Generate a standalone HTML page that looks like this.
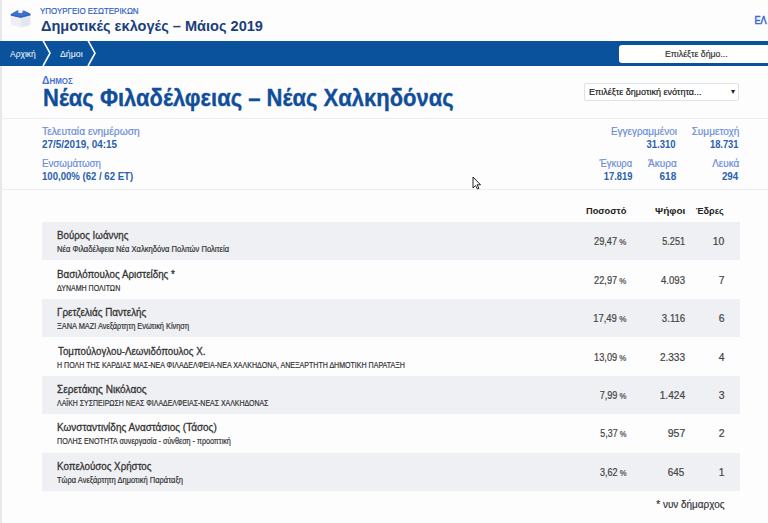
<!DOCTYPE html>
<html><head><meta charset="utf-8">
<style>
*{margin:0;padding:0;box-sizing:border-box}
html,body{width:768px;height:523px;overflow:hidden;background:#fdfdfe;font-family:"Liberation Sans",sans-serif}
.a{position:absolute;white-space:nowrap;line-height:1.15}
.hr{position:absolute;left:0;width:768px;height:1px;background:#eceef3}
.row{position:absolute;left:42px;width:697.5px;height:38.43px;background:#eff0f4}
</style></head><body>
<div class="a" style="left:0;top:0;width:2px;height:523px;background:#e6e7ea"></div>
<svg class="a" style="left:0;top:0" width="40" height="40" viewBox="0 0 40 40">
  <polygon points="10.8,15.3 20.7,17.7 20.7,27.6 10.8,24.9" fill="#edeff4"/>
  <polygon points="20.7,17.7 30.4,15.1 30.4,24.9 20.7,27.6" fill="#e3e6ed"/>
  <polygon points="10.8,13.9 17,10.6 24,10.4 30.4,13.6 30.4,15.2 20.7,17.7 10.8,15.5" fill="#3d71cd"/>
  <polygon points="10.8,14.3 20.7,16.4 30.4,13.9 30.4,15.2 20.7,17.7 10.8,15.5" fill="#2f62c0"/>
  <polygon points="17.8,12.4 19.6,9.4 23.3,10.8 21.5,13.3" fill="#f5f7fb"/>
</svg>
<div class="a" style="left:0;top:41px;width:768px;height:24.6px;background:#0b529c"></div>
<svg class="a" style="left:41.8px;top:41px" width="10" height="25" viewBox="0 0 10 25"><polyline points="1,-0.5 8,12.2 1,25" fill="none" stroke="#fff" stroke-width="1.6"/></svg>
<svg class="a" style="left:87.4px;top:41px" width="10" height="25" viewBox="0 0 10 25"><polyline points="1,-0.5 8,12.2 1,25" fill="none" stroke="#fff" stroke-width="1.6"/></svg>
<div class="a" style="left:619px;top:45px;width:160px;height:17.5px;background:#fff;border-radius:3px"></div>
<div class="a" style="left:584px;top:83px;width:155px;height:18px;border:1px solid #dde1e8;border-radius:2px;background:#fff"></div>
<div class="a" style="left:731px;top:86.5px;font-size:8px;color:#222">▾</div>
<div class="hr" style="top:117.5px"></div>
<div class="hr" style="top:188.5px"></div>
<div class="row" style="top:222.00px"></div>
<div class="row" style="top:298.86px"></div>
<div class="row" style="top:375.72px"></div>
<div class="row" style="top:452.58px"></div>
<div class="a" id="min" style="top:5.58px;font-size:8.7px;font-weight:normal;color:#2f62c6;left:40.34px;transform:scaleX(0.9142);transform-origin:left top;-webkit-text-stroke:0.2px currentColor;">ΥΠΟΥΡΓΕΙΟ ΕΣΩΤΕΡΙΚΩΝ</div>
<div class="a" id="app" style="top:17.1px;font-size:15.3px;font-weight:bold;color:#1b3f7a;left:40.64px;transform:scaleX(0.9520);transform-origin:left top;">Δημοτικές εκλογές – Μάιος 2019</div>
<div class="a" id="el" style="top:14.06px;font-size:11px;font-weight:normal;color:#3a68d2;right:1.66px;transform:scaleX(0.8330);transform-origin:right top;-webkit-text-stroke:0.55px currentColor;">ΕΛ</div>
<div class="a" id="cr1" style="top:48.84px;font-size:9.4px;font-weight:normal;color:#fff;left:9.66px;transform:scaleX(0.9017);transform-origin:left top;">Αρχική</div>
<div class="a" id="cr2" style="top:48.84px;font-size:9.4px;font-weight:normal;color:#fff;left:59.64px;transform:scaleX(0.9349);transform-origin:left top;">Δήμοι</div>
<div class="a" id="srch" style="top:48.83px;font-size:9.3px;font-weight:normal;color:#333;left:664.80px;transform:scaleX(0.9404);transform-origin:left top;-webkit-text-stroke:0.2px currentColor;">Επιλέξτε δήμο...</div>
<div class="a" id="dhm" style="top:73.98px;font-size:11.2px;font-weight:bold;color:#4a72d0;left:41.98px;transform:scaleX(0.9242);transform-origin:left top;">Δ<span style="font-size:0.77em">ΗΜΟΣ</span></div>
<div class="a" id="ttl" style="top:85.31px;font-size:23.1px;font-weight:bold;color:#114e9a;left:42.66px;transform:scaleX(0.9531);transform-origin:left top;-webkit-text-stroke:0.35px currentColor;">Νέας Φιλαδέλφειας – Νέας Χαλκηδόνας</div>
<div class="a" id="sel" style="top:86.71px;font-size:9px;font-weight:normal;color:#222;left:589.00px;transform:scaleX(1.0000);transform-origin:left top;-webkit-text-stroke:0.2px currentColor;">Επιλέξτε δημοτική ενότητα...</div>
<div class="a" id="l1" style="top:126.12px;font-size:10.4px;font-weight:normal;color:#6d8ed6;left:42.16px;transform:scaleX(0.9871);transform-origin:left top;-webkit-text-stroke:0.2px currentColor;">Τελευταία ενημέρωση</div>
<div class="a" id="v1" style="top:139.01px;font-size:10.3px;font-weight:bold;color:#2a5fac;left:42.00px;transform:scaleX(0.9644);transform-origin:left top;">27/5/2019, 04:15</div>
<div class="a" id="l2" style="top:157.82px;font-size:10.4px;font-weight:normal;color:#6d8ed6;left:42.16px;transform:scaleX(0.9372);transform-origin:left top;-webkit-text-stroke:0.2px currentColor;">Ενσωμάτωση</div>
<div class="a" id="v2" style="top:170.51px;font-size:10.3px;font-weight:bold;color:#2a5fac;left:42.16px;transform:scaleX(0.9307);transform-origin:left top;">100,00% (62 / 62 ET)</div>
<div class="a" id="l3" style="top:126.12px;font-size:10.4px;font-weight:normal;color:#6d8ed6;right:91.50px;transform:scaleX(0.9567);transform-origin:right top;-webkit-text-stroke:0.2px currentColor;">Εγγεγραμμένοι</div>
<div class="a" id="v3" style="top:139.01px;font-size:10.3px;font-weight:bold;color:#2a5fac;right:92.30px;transform:scaleX(0.9204);transform-origin:right top;">31.310</div>
<div class="a" id="l4" style="top:126.12px;font-size:10.4px;font-weight:normal;color:#6d8ed6;right:29.00px;transform:scaleX(0.9670);transform-origin:right top;-webkit-text-stroke:0.2px currentColor;">Συμμετοχή</div>
<div class="a" id="v4" style="top:139.01px;font-size:10.3px;font-weight:bold;color:#2a5fac;right:29.80px;transform:scaleX(0.9068);transform-origin:right top;">18.731</div>
<div class="a" id="l5" style="top:157.82px;font-size:10.4px;font-weight:normal;color:#6d8ed6;right:135.46px;transform:scaleX(0.9061);transform-origin:right top;-webkit-text-stroke:0.2px currentColor;">Έγκυρα</div>
<div class="a" id="v5" style="top:170.51px;font-size:10.3px;font-weight:bold;color:#2a5fac;right:135.46px;transform:scaleX(0.9101);transform-origin:right top;">17.819</div>
<div class="a" id="l6" style="top:157.82px;font-size:10.4px;font-weight:normal;color:#6d8ed6;right:91.50px;transform:scaleX(0.9660);transform-origin:right top;-webkit-text-stroke:0.2px currentColor;">Άκυρα</div>
<div class="a" id="v6" style="top:170.51px;font-size:10.3px;font-weight:bold;color:#2a5fac;right:91.50px;transform:scaleX(0.9697);transform-origin:right top;">618</div>
<div class="a" id="l7" style="top:157.82px;font-size:10.4px;font-weight:normal;color:#6d8ed6;right:29.00px;transform:scaleX(0.9579);transform-origin:right top;-webkit-text-stroke:0.2px currentColor;">Λευκά</div>
<div class="a" id="v7" style="top:170.51px;font-size:10.3px;font-weight:bold;color:#2a5fac;right:29.80px;transform:scaleX(0.9472);transform-origin:right top;">294</div>
<div class="a" id="h1" style="top:204.66px;font-size:9.7px;font-weight:bold;color:#222;right:141.92px;transform:scaleX(0.9534);transform-origin:right top;">Ποσοστό</div>
<div class="a" id="h2" style="top:204.66px;font-size:9.7px;font-weight:bold;color:#222;right:82.80px;transform:scaleX(1.0303);transform-origin:right top;">Ψήφοι</div>
<div class="a" id="h3" style="top:204.66px;font-size:9.7px;font-weight:bold;color:#222;right:43.92px;transform:scaleX(0.9387);transform-origin:right top;">Έδρες</div>
<div class="a" id="n0" style="top:229.25px;font-size:10.8px;font-weight:normal;color:#333;left:57.14px;transform:scaleX(0.9023);transform-origin:left top;-webkit-text-stroke:0.3px currentColor;">Βούρος Ιωάννης</div>
<div class="a" id="s0" style="top:245.25px;font-size:8.3px;font-weight:normal;color:#333;left:56.66px;transform:scaleX(0.9174);transform-origin:left top;-webkit-text-stroke:0.2px currentColor;">Νέα Φιλαδέλφεια Νέα Χαλκηδόνα Πολιτών Πολιτεία</div>
<div class="a" id="p0" style="top:236.22px;font-size:10.4px;font-weight:normal;color:#444;right:141.92px;transform:scaleX(0.8892);transform-origin:right top;-webkit-text-stroke:0.2px currentColor;">29,47<span style="font-size:0.85em"> %</span></div>
<div class="a" id="w0" style="top:236.22px;font-size:10.4px;font-weight:normal;color:#444;right:82.96px;transform:scaleX(0.8758);transform-origin:right top;-webkit-text-stroke:0.2px currentColor;">5.251</div>
<div class="a" id="e0" style="top:236.22px;font-size:10.4px;font-weight:normal;color:#444;right:43.60px;transform:scaleX(1.0000);transform-origin:right top;-webkit-text-stroke:0.2px currentColor;">10</div>
<div class="a" id="n1" style="top:267.68px;font-size:10.8px;font-weight:normal;color:#333;left:57.14px;transform:scaleX(0.9067);transform-origin:left top;-webkit-text-stroke:0.3px currentColor;">Βασιλόπουλος Αριστείδης *</div>
<div class="a" id="s1" style="top:283.68px;font-size:8.3px;font-weight:normal;color:#333;left:57.46px;transform:scaleX(0.8493);transform-origin:left top;-webkit-text-stroke:0.2px currentColor;">ΔΥΝΑΜΗ ΠΟΛΙΤΩΝ</div>
<div class="a" id="p1" style="top:274.65px;font-size:10.4px;font-weight:normal;color:#444;right:141.92px;transform:scaleX(0.8884);transform-origin:right top;-webkit-text-stroke:0.2px currentColor;">22,97<span style="font-size:0.85em"> %</span></div>
<div class="a" id="w1" style="top:274.65px;font-size:10.4px;font-weight:normal;color:#444;right:82.96px;transform:scaleX(0.9237);transform-origin:right top;-webkit-text-stroke:0.2px currentColor;">4.093</div>
<div class="a" id="e1" style="top:274.65px;font-size:10.4px;font-weight:normal;color:#444;right:43.60px;transform:scaleX(1.0000);transform-origin:right top;-webkit-text-stroke:0.2px currentColor;">7</div>
<div class="a" id="n2" style="top:306.11px;font-size:10.8px;font-weight:normal;color:#333;left:57.14px;transform:scaleX(0.9113);transform-origin:left top;-webkit-text-stroke:0.3px currentColor;">Γρετζελιάς Παντελής</div>
<div class="a" id="s2" style="top:322.11px;font-size:8.3px;font-weight:normal;color:#333;left:56.66px;transform:scaleX(0.8904);transform-origin:left top;-webkit-text-stroke:0.2px currentColor;">ΞΑΝΑ ΜΑΖΙ Ανεξάρτητη Ενωτική Κίνηση</div>
<div class="a" id="p2" style="top:313.08px;font-size:10.4px;font-weight:normal;color:#444;right:141.92px;transform:scaleX(0.9139);transform-origin:right top;-webkit-text-stroke:0.2px currentColor;">17,49<span style="font-size:0.85em"> %</span></div>
<div class="a" id="w2" style="top:313.08px;font-size:10.4px;font-weight:normal;color:#444;right:82.96px;transform:scaleX(0.9269);transform-origin:right top;-webkit-text-stroke:0.2px currentColor;">3.116</div>
<div class="a" id="e2" style="top:313.08px;font-size:10.4px;font-weight:normal;color:#444;right:43.60px;transform:scaleX(1.0000);transform-origin:right top;-webkit-text-stroke:0.2px currentColor;">6</div>
<div class="a" id="n3" style="top:344.54px;font-size:10.8px;font-weight:normal;color:#333;left:57.94px;transform:scaleX(0.9029);transform-origin:left top;-webkit-text-stroke:0.3px currentColor;">Τομπούλογλου-Λεωνιδόπουλος Χ.</div>
<div class="a" id="s3" style="top:360.54px;font-size:8.3px;font-weight:normal;color:#333;left:56.66px;transform:scaleX(0.8506);transform-origin:left top;-webkit-text-stroke:0.2px currentColor;">Η ΠΟΛΗ ΤΗΣ ΚΑΡΔΙΑΣ ΜΑΣ-ΝΕΑ ΦΙΛΑΔΕΛΦΕΙΑ-ΝΕΑ ΧΑΛΚΗΔΟΝΑ, ΑΝΕΞΑΡΤΗΤΗ ΔΗΜΟΤΙΚΗ ΠΑΡΑΤΑΞΗ</div>
<div class="a" id="p3" style="top:351.51px;font-size:10.4px;font-weight:normal;color:#444;right:141.92px;transform:scaleX(0.8884);transform-origin:right top;-webkit-text-stroke:0.2px currentColor;">13,09<span style="font-size:0.85em"> %</span></div>
<div class="a" id="w3" style="top:351.51px;font-size:10.4px;font-weight:normal;color:#444;right:82.96px;transform:scaleX(0.9634);transform-origin:right top;-webkit-text-stroke:0.2px currentColor;">2.333</div>
<div class="a" id="e3" style="top:351.51px;font-size:10.4px;font-weight:normal;color:#444;right:43.60px;transform:scaleX(1.0000);transform-origin:right top;-webkit-text-stroke:0.2px currentColor;">4</div>
<div class="a" id="n4" style="top:382.97px;font-size:10.8px;font-weight:normal;color:#333;left:57.14px;transform:scaleX(0.9300);transform-origin:left top;-webkit-text-stroke:0.3px currentColor;">Σερετάκης Νικόλαος</div>
<div class="a" id="s4" style="top:398.97px;font-size:8.3px;font-weight:normal;color:#333;left:57.46px;transform:scaleX(0.8384);transform-origin:left top;-webkit-text-stroke:0.2px currentColor;">ΛΑΪΚΗ ΣΥΣΠΕΙΡΩΣΗ ΝΕΑΣ ΦΙΛΑΔΕΛΦΕΙΑΣ-ΝΕΑΣ ΧΑΛΚΗΔΟΝΑΣ</div>
<div class="a" id="p4" style="top:389.94px;font-size:10.4px;font-weight:normal;color:#444;right:141.92px;transform:scaleX(0.8811);transform-origin:right top;-webkit-text-stroke:0.2px currentColor;">7,99<span style="font-size:0.85em"> %</span></div>
<div class="a" id="w4" style="top:389.94px;font-size:10.4px;font-weight:normal;color:#444;right:82.96px;transform:scaleX(0.9715);transform-origin:right top;-webkit-text-stroke:0.2px currentColor;">1.424</div>
<div class="a" id="e4" style="top:389.94px;font-size:10.4px;font-weight:normal;color:#444;right:43.60px;transform:scaleX(1.0000);transform-origin:right top;-webkit-text-stroke:0.2px currentColor;">3</div>
<div class="a" id="n5" style="top:421.4px;font-size:10.8px;font-weight:normal;color:#333;left:57.14px;transform:scaleX(0.9231);transform-origin:left top;-webkit-text-stroke:0.3px currentColor;">Κωνσταντινίδης Αναστάσιος (Τάσος)</div>
<div class="a" id="s5" style="top:437.4px;font-size:8.3px;font-weight:normal;color:#333;left:56.66px;transform:scaleX(0.8656);transform-origin:left top;-webkit-text-stroke:0.2px currentColor;">ΠΟΛΗΣ ΕΝΟΤΗΤΑ συνεργασία - σύνθεση - προοπτική</div>
<div class="a" id="p5" style="top:428.37px;font-size:10.4px;font-weight:normal;color:#444;right:141.92px;transform:scaleX(0.8568);transform-origin:right top;-webkit-text-stroke:0.2px currentColor;">5,37<span style="font-size:0.85em"> %</span></div>
<div class="a" id="w5" style="top:428.37px;font-size:10.4px;font-weight:normal;color:#444;right:82.96px;transform:scaleX(1.0143);transform-origin:right top;-webkit-text-stroke:0.2px currentColor;">957</div>
<div class="a" id="e5" style="top:428.37px;font-size:10.4px;font-weight:normal;color:#444;right:43.60px;transform:scaleX(1.0000);transform-origin:right top;-webkit-text-stroke:0.2px currentColor;">2</div>
<div class="a" id="n6" style="top:459.83px;font-size:10.8px;font-weight:normal;color:#333;left:57.14px;transform:scaleX(0.9038);transform-origin:left top;-webkit-text-stroke:0.3px currentColor;">Κοπελούσος Χρήστος</div>
<div class="a" id="s6" style="top:475.83px;font-size:8.3px;font-weight:normal;color:#333;left:57.46px;transform:scaleX(0.9068);transform-origin:left top;-webkit-text-stroke:0.2px currentColor;">Τώρα Ανεξάρτητη Δημοτική Παράταξη</div>
<div class="a" id="p6" style="top:466.8px;font-size:10.4px;font-weight:normal;color:#444;right:141.92px;transform:scaleX(0.8696);transform-origin:right top;-webkit-text-stroke:0.2px currentColor;">3,62<span style="font-size:0.85em"> %</span></div>
<div class="a" id="w6" style="top:466.8px;font-size:10.4px;font-weight:normal;color:#444;right:83.76px;transform:scaleX(0.9512);transform-origin:right top;-webkit-text-stroke:0.2px currentColor;">645</div>
<div class="a" id="e6" style="top:466.8px;font-size:10.4px;font-weight:normal;color:#444;right:43.60px;transform:scaleX(1.0000);transform-origin:right top;-webkit-text-stroke:0.2px currentColor;">1</div>
<div class="a" id="foot" style="top:497.86px;font-size:11px;font-weight:normal;color:#333;right:43.00px;transform:scaleX(0.9033);transform-origin:right top;-webkit-text-stroke:0.2px currentColor;">* νυν δήμαρχος</div>
<svg class="a" style="left:472px;top:176px" width="11" height="14" viewBox="0 0 11 14">
<path d="M1,1 L1,12 L3.5,9.5 L5.5,13 L7,12.3 L5,8.8 L8.5,8.8 Z" fill="#fff" stroke="#222" stroke-width="1"/>
</svg>
</body></html>
